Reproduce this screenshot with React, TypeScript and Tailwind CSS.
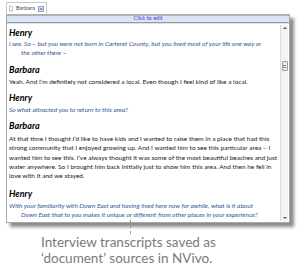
import React from "react";

const body = "text-[6.5px] leading-[9.3px] text-[#1a1a1a] whitespace-nowrap";
const quote = "text-[6.5px] leading-[9.3px] italic text-[#33559a] whitespace-nowrap";
const name = "text-[9px] leading-[11px] font-bold italic text-black";

function Speaker({ who }: { who: string }) {
  return <div className={name}>{who}</div>;
}

export default function App() {
  return (
    <div className="w-[301px] h-[275px] bg-white relative overflow-hidden" style={{ fontFamily: "Lato, 'Open Sans', sans-serif" }}>
      <div className="pt-[2px] pl-[6px] w-[290px]">
        {/* tab */}
        <div className="flex items-center gap-[3px] w-[41px] h-[12px] border border-b-0 border-[#c8c8c8] bg-white px-[2px]">
          <svg width="5" height="7" viewBox="0 0 5 7">
            <path d="M0.5 0.5h2.8l1.2 1.2v4.8h-4z" fill="#fff" stroke="#999" strokeWidth="0.8" />
          </svg>
          <span className="text-[5.5px] text-[#444] leading-none">Barbara</span>
          <span className="ml-auto w-[7px] h-[6px] border border-[#8aa0c8] bg-[#dfe7f3] text-[6px] leading-[4px] text-[#334] flex items-center justify-center">
            ×
          </span>
        </div>

        {/* window */}
        <div className="border border-[#a8a8a8] border-t-[2px] border-t-[#b0b0b0] bg-white shadow-[4px_4px_3px_rgba(0,0,0,0.45)]">
          <div className="h-[7px] bg-[#d9e4f5] border-b border-[#9a9a9a] flex items-center justify-center">
            <span className="text-[5.5px] leading-none text-[#3a3ae0]">Click to edit</span>
          </div>
          <div className="flex h-[199px] border-t border-[#e0e0e0]">
            <div className="flex-1 pl-[2px] pt-[3px] overflow-hidden">
              <Speaker who="Henry" />
              <div className={`${quote} mt-[1px]`}>
                <div>I see. So – but you were not born in Carteret County, but you lived most of your life one way or</div>
                <div className="pl-[12px]">the other there –</div>
              </div>

              <div className="mt-[6px]">
                <Speaker who="Barbara" />
              </div>
              <div className={`${body} mt-[2px]`}>
                Yeah. And I’m definitely not considered a local. Even though I feel kind of like a local.
              </div>

              <div className="mt-[6px]">
                <Speaker who="Henry" />
              </div>
              <div className={`${quote} mt-[2px]`}>So what attracted you to return to this area?</div>

              <div className="mt-[6px]">
                <Speaker who="Barbara" />
              </div>
              <div className={`${body} mt-[3px]`}>
                <div>At that time I thought I’d like to have kids and I wanted to raise them in a place that had this</div>
                <div>strong community that I enjoyed growing up. And I wanted him to see this particular area – I</div>
                <div>wanted him to see this. I’ve always thought it was some of the most beautiful beaches and just</div>
                <div>water anywhere. So I brought him back initially just to show him this area. And then he fell in</div>
                <div>love with it and we stayed.</div>
              </div>

              <div className="mt-[7px]">
                <Speaker who="Henry" />
              </div>
              <div className={`${quote} mt-[2px]`}>
                <div>With your familiarity with Down East and having lived here now for awhile, what is it about</div>
                <div className="pl-[12px]">Down East that to you makes it unique or different from other places in your experience?</div>
              </div>
            </div>

            {/* scrollbar */}
            <div className="w-[8px] mr-[1px] my-[1px] bg-[#f2f2f2] border-l border-[#dcdcdc] flex flex-col items-center">
              <div className="h-[6px] w-full flex items-center justify-center">
                <div className="w-0 h-0 border-l-[2px] border-r-[2px] border-b-[2px] border-l-transparent border-r-transparent border-b-[#555]" />
              </div>
              <div className="mt-[30px] w-[6px] h-[10px] bg-[#e8e8e8] border border-[#a0a0a0] rounded-[1px] flex flex-col items-center justify-center gap-[1px]">
                <div className="w-[3px] h-px bg-[#888]" />
                <div className="w-[3px] h-px bg-[#888]" />
              </div>
              <div className="flex-1" />
              <div className="h-[6px] w-full flex items-center justify-center">
                <div className="w-0 h-0 border-l-[2px] border-r-[2px] border-t-[2px] border-l-transparent border-r-transparent border-t-[#555]" />
              </div>
            </div>
          </div>
        </div>
      </div>

      {/* callout */}
      <div className="absolute left-[130px] top-[214px] h-[20px] border-l border-dashed border-[#999]" />
      <div className="pl-[41px] mt-[11px] text-[13.5px] leading-[16px] text-[#7a7a7a]">
        <div>Interview transcripts saved as</div>
        <div>‘document’ sources in NVivo.</div>
      </div>
    </div>
  );
}
